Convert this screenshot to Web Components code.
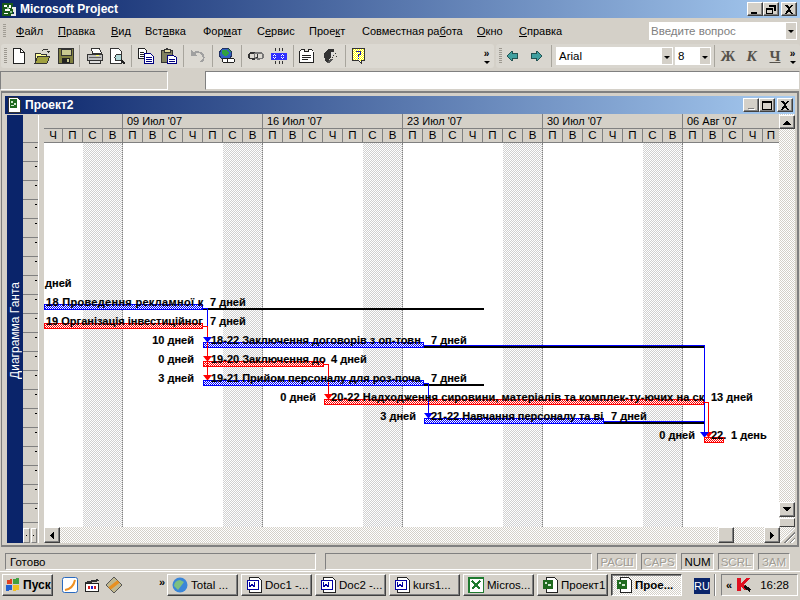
<!DOCTYPE html>
<html>
<head>
<meta charset="utf-8">
<title>Microsoft Project</title>
<style>
  html, body { margin: 0; padding: 0; height: 100%; overflow: hidden; background: #d4d0c8; }
  body { display: flex; flex-direction: column; width: 800px; height: 600px;
         font: 11px "Liberation Sans", Arial, sans-serif; color: #000; }
</style>
</head>
<body>
<app-titlebar></app-titlebar>
<menu-bar></menu-bar>
<tool-bars></tool-bars>
<entry-bar></entry-bar>
<project-window></project-window>
<status-bar></status-bar>
<task-bar></task-bar>

<script>
const GRAD = 'linear-gradient(90deg,#0a246a 0,#a6caf0 100%)';
const UI_FONT = '11.5px "Liberation Sans",Arial,sans-serif';

// small raised caption button (min, restore, close, scroll arrows)
class CapButton extends HTMLElement {
    constructor(){
        super();
        this.attachShadow({mode: 'open'});
        this.shadowRoot.innerHTML = `
            <style>
                :host { display: flex; align-items: center; justify-content: center; box-sizing: border-box;
                    width: var(--w,16px); height: var(--h,14px); background: #d4d0c8;
                    border: 1px solid; border-color: #fff #404040 #404040 #fff;
                    box-shadow: inset -1px -1px 0 #808080; flex: none; }
                svg { display: block; }
            </style>
            <svg width="10" height="9" viewBox="0 0 10 9" shape-rendering="crispEdges"></svg>
        `;
    }
    connectedCallback(){
        const shapes = {
            min: '<path d="M1 7h6v2H1z" fill="#000"/>',
            mingrey: '<path d="M2 7h6v1H2z" fill="#808080"/><path d="M3 8h6v1H3z" fill="#fff"/>',
            max: '<path d="M0 0h10v9H0zM1 2v6h8V2z" fill="#000" fill-rule="evenodd"/>',
            restore: '<path d="M3 0h7v6H8V2H3z M0 3h7v6H0z M1 5v3h5V5z" fill="#000" fill-rule="evenodd"/>',
            close: '<path d="M1 0h2l2 2 2-2h2L6 4l3 5H7L5 6 3 9H1l3-5z" fill="#000"/>',
            up: '<path d="M5 2l4 5H1z" fill="#000"/>',
            down: '<path d="M1 2h8L5 7z" fill="#000"/>',
            left: '<path d="M7 0v9L3 4.5z" fill="#000"/>',
            right: '<path d="M3 0v9l4-4.5z" fill="#000"/>'
        };
        this.shadowRoot.querySelector('svg').innerHTML = shapes[this.getAttribute('kind')] || '';
    }
}
customElements.define('cap-button', CapButton);

class AppTitlebar extends HTMLElement {
    constructor(){
        super();
        this.attachShadow({mode: 'open'});
        this.shadowRoot.innerHTML = `
            <style>
                :host { display: flex; align-items: center; height: 18px; flex: none; background: ${GRAD};
                    color: #fff; font: bold 12px "Liberation Sans",Arial,sans-serif; padding: 0 3px 0 2px; box-sizing: border-box; }
                svg { margin-right: 3px; flex: none; }
                span { flex: 1; }
                .btns { display: flex; }
                cap-button:last-child { margin-left: 2px; }
            </style>
            <svg width="15" height="15" viewBox="0 0 15 15" shape-rendering="crispEdges">
                <path d="M0 1h11v13H0z" fill="#1a5a1a"/>
                <path d="M2 3h3v2H2zM7 3h2v3H7zM3 7h5v2H3zM2 11h4v1H2z" fill="#fff"/>
                <path d="M10 5h4v9h-5v-2h3z" fill="#e8e8e8"/>
                <path d="M5 5h2v2H5zM8 9h2v2H8z" fill="#90c090"/>
            </svg>
            <span>Microsoft Project</span>
            <div class="btns">
                <cap-button kind="min"></cap-button><cap-button kind="restore"></cap-button><cap-button kind="close"></cap-button>
            </div>
        `;
    }
}
customElements.define('app-titlebar', AppTitlebar);

class MenuBar extends HTMLElement {
    constructor(){
        super();
        this.attachShadow({mode: 'open'});
        const items = [['Файл',0,42],['Правка',0,53],['Вид',0,34],['Вставка',3,58],['Формат',3,54],['Сервис',1,52],['Проект',4,53],['Совместная работа',13,115],['Окно',0,42],['Справка',0,60]];
        const html = items.map(([t,u,w]) => `<span class="it" style="width:${w}px">${t.slice(0,u)}<u>${t[u]}</u>${t.slice(u+1)}</span>`).join('');
        this.shadowRoot.innerHTML = `
            <style>
                :host { display: flex; align-items: center; height: 26px; flex: none; background: #d4d0c8; box-sizing: border-box; padding-left: 3px;
                    font: 11px "Liberation Sans",Arial,sans-serif; }
                .grip { width: 3px; height: 14px; margin-right: 10px; background: repeating-linear-gradient(#a09c94 0 1px,#d4d0c8 1px 2px); }
                .it { flex: none; white-space: nowrap; }
                .ask { margin-left: auto; margin-right: 3px; width: 148px; height: 18px; background: #fff; display: flex; align-items: center;
                    color: #808080; box-sizing: border-box; padding-left: 2px; font: ${UI_FONT}; }
                .ask span { flex: 1; }
                .dd { width: 12px; height: 18px; background: #d4d0c8; border: 1px solid #fff; box-sizing: border-box; display: flex; align-items: center; justify-content: center; }
                .dd i { border: 3px solid transparent; border-top: 3px solid #000; border-bottom: 0; }
            </style>
            <div class="grip"></div>${html}
            <div class="ask"><span>Введите вопрос</span><div class="dd"><i></i></div></div>
        `;
    }
}
customElements.define('menu-bar', MenuBar);

// pixel style toolbar icons
const ICONS = {
    'new': '<path d="M2.500 .5h7l4 4v11h-11z" fill="#fff" stroke="#222"/><path d="M9.500 .5v4h4" fill="none" stroke="#222"/>',
    open: '<path d="M1 5h5l1 1h5v3H4L1 15z" fill="#ffff99" stroke="#333"/><path d="M1 15l3-7h12l-3 7z" fill="#a0a040" stroke="#333"/><path d="M8 3q3-3 6-1" fill="none" stroke="#333"/><path d="M12 3h4l-2 2z" fill="#333"/>',
    save: '<path d="M.5 .5h15v15H.5z" fill="#808040" stroke="#333"/><path d="M3 1h10v6H3z" fill="#c8c890" stroke="#333"/><path d="M4 10h8v5H4z" fill="#222"/><path d="M9 11h2v3H9z" fill="#c8c890"/>',
    print: '<path d="M4.500 .5h8l2 5h-9z" fill="#fff" stroke="#333"/><path d="M.5 6.500h15v6H.5z" fill="#c0c0c0" stroke="#333"/><path d="M2 9h12v1H2z" fill="#606060"/><path d="M9 7h3v1H9z" fill="#ffff60"/><path d="M2.500 12.500h11v3h-11z" fill="#e0e0e0" stroke="#333"/>',
    preview: '<path d="M1.500 .5h8l3 3v12h-11z" fill="#fff" stroke="#333"/><circle cx="9.500" cy="9.500" r="3.500" fill="#b0d8d8" stroke="#333"/><path d="M12 12l4 4" stroke="#222" stroke-width="2"/>',
    copy: '<path d="M.5 .5h6l2 2v8h-8z" fill="#fff" stroke="#222"/><path d="M2 4h4M2 6h4M2 8h4" stroke="#222"/><path d="M6.500 5.500h6l3 3v7h-9z" fill="#fff" stroke="#000080"/><path d="M8 9h6M8 11h6M8 13h6" stroke="#000080"/>',
    paste: '<path d="M.5 2.500h11v12H.5z" fill="#808060" stroke="#333"/><path d="M3 1h6v3H3z" fill="#e0d8a0" stroke="#333"/><path d="M5 0h2v1H5z" fill="#333"/><path d="M6.500 7.500h6l3 2v6h-9z" fill="#fff" stroke="#000080"/><path d="M8 11h6M8 13h6" stroke="#000080"/>',
    undo: '<path d="M1 2v6h6L5 6c3-2 7-1 8 4-1 2-2 3-3 4h2c3-2 3-5 2-7C12 3 7 2 4 4z" fill="#a0a0a0"/>',
    globe: '<circle cx="6.500" cy="6" r="6" fill="#3060c0" stroke="#203060"/><path d="M3 2h5l2 3-2 3H5L3 5zM9 1l3 2-1 1z" fill="#30a040"/><rect x="3.500" y="10.500" width="7" height="4" rx="2" fill="#fff" stroke="#222"/><rect x="8.500" y="10.500" width="7" height="4" rx="2" fill="#fff" stroke="#222"/>',
    link: '<rect x=".75" y="4.750" width="9" height="6" rx="3" fill="none" stroke="#333" stroke-width="1.500"/><rect x="6.250" y="4.750" width="9" height="6" rx="3" fill="none" stroke="#777" stroke-width="1.500"/>',
    unlink: '<defs><pattern id="bd" width="2" height="2" patternUnits="userSpaceOnUse"><path d="M0 0h2v2H0z" fill="#fff"/><path d="M0 0h1v1H0zM1 1h1v1H1z" fill="#2020ff"/></pattern></defs><path d="M0 5h16v7H0z" fill="#3030ff"/><path d="M2 6h3v2H2zM10 6h3v2h-3zM2 9h3v2H2zM10 9h3v2h-3z" fill="url(#bd)"/><path d="M4 0l1 3M8 0v3M12 0l-1 3M4 16l1-3M8 16v-3M12 16l-1-3" stroke="#333"/>',
    notes: '<path d="M.5 3.500h14v11H.5z" fill="#fff" stroke="#222"/><path d="M.5 3.500l2-2h3v2M9.500 3.500v-2h3l2 2" fill="#fff" stroke="#222"/><path d="M3 7h9M3 9h9M3 11h6" stroke="#222"/>',
    assign: '<path d="M1 9a7 7 0 0 1 7-8h3v3l-3 2v3l-3 5H3z" fill="#333"/><path d="M7 11h3l-3 4H3z" fill="#555"/><path d="M10 3h1v1h-1zM12 5h1v1h-1zM10 7h1v1h-1zM13 8h1v1h-1zM9 9h1v1H9z" fill="#333"/><path d="M8 4h2v4H8z" fill="#ddd"/>',
    help: '<defs><pattern id="yd" width="2" height="2" patternUnits="userSpaceOnUse"><path d="M0 0h2v2H0z" fill="#fff"/><path d="M0 0h1v1H0zM1 1h1v1H1z" fill="#ffff00"/></pattern></defs><path d="M.5 .5h12v12h-3v3l-3-3h-6z" fill="url(#yd)" stroke="#333"/><path d="M4 4V3h5v4H7v2H6V6h2V4H5v1zM6 10h1v1H6z" fill="#2020b0"/>',
    back: '<path d="M7 1v4h7v6H7v4L0 8z" fill="#40a0a0" stroke="#205050" stroke-width="1.300"/>',
    fwd: '<path d="M7 1v4H0v6h7v4l7-7z" fill="#40a0a0" stroke="#205050" stroke-width="1.300"/>'
};

class ToolIcon extends HTMLElement {
    constructor(){
        super();
        this.attachShadow({mode: 'open'});
    }
    connectedCallback(){
        const w = this.getAttribute('w') || 23;
        const s = this.getAttribute('s') || 16;
        this.shadowRoot.innerHTML = `
            <style>
                :host { display: flex; align-items: center; justify-content: center; height: 24px; flex: none; width: ${w}px; }
            </style>
            <svg width="${s}" height="${s}" viewBox="0 0 16 16" shape-rendering="crispEdges">${ICONS[this.getAttribute('name')]}</svg>
        `;
    }
}
customElements.define('tool-icon', ToolIcon);

class ToolBars extends HTMLElement {
    constructor(){
        super();
        this.attachShadow({mode: 'open'});
        const ic = (n, w, s) => `<tool-icon name="${n}" w="${w}" ${s ? `s="${s}"` : ''}></tool-icon>`;
        const sep = (l, r) => `<i class="sep" style="margin:0 ${r}px 0 ${l}px"></i>`;
        this.shadowRoot.innerHTML = `
            <style>
                :host { display: flex; height: 24px; flex: none; gap: 2px; padding: 0 0 0 1px; }
                .bar { display: flex; align-items: center; height: 24px; background: #dcd9d2; border-radius: 3px; box-sizing: border-box; flex: none; }
                .one { width: 493px; padding-left: 2px; }
                .two { flex: 1; background: #d9d6cf; }
                .grip { width: 3px; height: 16px; margin: 0 0 0 1px; flex: none; background: repeating-linear-gradient(#9c9890 0 1px,transparent 1px 2px); }
                .sep { width: 1px; height: 22px; background: #a8a59d; flex: none; }
                .more { margin-left: auto; width: 11px; font: bold 10px/9px "Liberation Sans",sans-serif; text-align: center; margin-right: 2px; color: #000; flex: none; }
                .more b { display: block; width: 0; margin: 3px auto 0; border: 3px solid transparent; border-top-color: #000; border-bottom: 0; }
                .fld { height: 18px; background: #fff; display: flex; align-items: center; box-sizing: border-box; padding-left: 3px; font: ${UI_FONT}; flex: none; }
                .fld span { flex: 1; }
                .dd { width: 12px; height: 18px; background: #d4d0c8; display: flex; align-items: center; justify-content: center; border: 1px solid #fff; box-sizing: border-box; }
                .dd i { border: 3px solid transparent; border-top-color: #000; border-bottom: 0; margin-top: 2px; }
                .fm { text-align: center; font: bold 15px "Liberation Serif",serif; color: #55524c; flex: none; }
            </style>
            <div class="bar one">
                <div class="grip"></div>
                ${ic('new',23)}${ic('open',24)}${ic('save',23)}${sep(2,3)}
                ${ic('print',23)}${ic('preview',22)}${sep(3,2)}
                ${ic('copy',23)}${ic('paste',24)}${sep(2,2)}
                ${ic('undo',24)}${sep(2,2)}
                ${ic('globe',24)}${sep(2,2)}
                ${ic('link',24)}${ic('unlink',22)}${sep(3,1)}
                ${ic('notes',24)}${ic('assign',24)}${sep(2,2)}
                ${ic('help',24)}
                <div class="more">»<b></b></div>
            </div>
            <div class="bar two">
                <div class="grip" style="margin-left:3px"></div>
                ${ic('back',22,12)}${ic('fwd',26,12)}
                ${sep(1,4)}
                <div class="fld" style="width:117px"><span>Arial</span><div class="dd"><i></i></div></div>
                <div class="fld" style="width:36px;margin-left:2px"><span>8</span><div class="dd"><i></i></div></div>
                ${sep(3,1)}
                <span class="fm" style="width:24px">Ж</span><span class="fm" style="width:23px;font-style:italic">К</span><span class="fm" style="width:24px;text-decoration:underline">Ч</span>
                <div class="more">»<b></b></div>
            </div>
        `;
    }
}
customElements.define('tool-bars', ToolBars);

class EntryBar extends HTMLElement {
    constructor(){
        super();
        this.attachShadow({mode: 'open'});
        this.shadowRoot.innerHTML = `
            <style>
                :host { display: flex; align-items: center; height: 22px; flex: none; box-sizing: border-box; padding-top: 2px; }
                .name { width: 168px; height: 19px; border: 1px solid; border-color: #808080 #fff #fff #808080; box-sizing: border-box; }
                .val { margin-left: 37px; flex: 1; height: 19px; background: #fff; border: 1px solid; border-color: #808080 #d4d0c8 #d4d0c8 #808080; box-sizing: border-box; }
            </style>
            <div class="name"></div><div class="val"></div>
        `;
    }
}
customElements.define('entry-bar', EntryBar);

class ProjectWindow extends HTMLElement {
    constructor(){
        super();
        this.attachShadow({mode: 'open'});
        this.shadowRoot.innerHTML = `
            <style>
                :host { display: block; flex: none; height: 461px; box-sizing: border-box; padding: 1px 1px 4px 1px; background: #d4d0c8; }
                .frame { height: 100%; box-sizing: border-box; background: #d4d0c8; border: 1px solid #808080; border-width: 2px 2px 2px 1px; padding: 3px 2px 2px 3px; display: flex; flex-direction: column; }
                .cap { height: 18px; flex: none; background: ${GRAD}; color: #fff; font: bold 12px "Liberation Sans",sans-serif; display: flex; align-items: center; box-sizing: border-box; padding: 0 2px 0 2px; }
                .cap svg { margin-right: 3px; }
                .cap span { flex: 1; }
                .cap cap-button:last-child { margin-left: 2px; }
            </style>
            <div class="frame">
                <div class="cap">
                    <svg width="15" height="16" viewBox="0 0 15 16" shape-rendering="crispEdges">
                        <path d="M1.500 .5h9l3 3v12h-12z" fill="#fff" stroke="#333"/>
                        <path d="M3 2h7v9H3z" fill="#1f6a1f"/>
                        <path d="M4 4h2v2H4zM7 6h2v2H7zM4 8h3v1H4z" fill="#d0e8d0"/>
                    </svg>
                    <span>Проект2</span>
                    <cap-button kind="mingrey"></cap-button><cap-button kind="max"></cap-button><cap-button kind="close"></cap-button>
                </div>
                <gantt-view></gantt-view>
            </div>
        `;
    }
}
customElements.define('project-window', ProjectWindow);

class GanttView extends HTMLElement {
    constructor(){
        super();
        this.attachShadow({mode: 'open'});
        const week = ['П','В','С','Ч','П','С','В'];
        let days = ['Ч','П','С','В'];
        for (let i = 0; i < 4; i++) days = days.concat(week);
        days = days.concat(['П','В','С','Ч','П']);
        const dayCells = days.map(d => `<span>${d}</span>`).join('');
        let rows = '';
        for (let i = 0; i < 21; i++) rows += '<i></i>';
        this.shadowRoot.innerHTML = `
            <style>
                :host { display: flex; flex: 1; min-height: 0; background: #d4d0c8; font: 11px "Liberation Sans",sans-serif; }
                .band { width: 16px; flex: none; background: #0a246a; margin: 1px 0 0 2px; display: flex; justify-content: center; align-items: flex-start; }
                .band span { writing-mode: vertical-rl; transform: rotate(180deg); margin-top: 167px; white-space: nowrap; color: #fff; font: 12px "Liberation Sans",sans-serif; }
                .rh { width: 15px; flex: none; display: flex; flex-direction: column; overflow: hidden; margin-top: 1px; border-right: 1px solid #fff; }
                .rh i { display: block; height: 19px; flex: none; border-bottom: 1px solid #808080; box-sizing: border-box; position: relative; background: #d4d0c8; }
                .rh i:first-child { height: 28px; }
                .rh i::after { content: ''; position: absolute; right: 1px; top: 4px; width: 2px; height: 1px; background: #000; }
                .rh i:first-child::after { display: none; }
                .tail { display: flex; margin-top: auto; height: 15px; flex: none; gap: 1px; padding-right: 1px; }
                .tail b { flex: 1; background: #d4d0c8; border: 1px solid; border-color: #fff #808080 #808080 #fff; display: flex; align-items: center; justify-content: center; }
                .tail b::after { content: ''; width: 1px; height: 1px; background: #000; }
                .gap { width: 5px; flex: none; background: #d4d0c8; }
                .main { flex: 1; display: flex; flex-direction: column; min-width: 0; }
                .top { display: flex; flex: 1; min-height: 0; }
                .chart { flex: 1; min-width: 0; display: flex; flex-direction: column; }
                .dates { height: 15px; flex: none; display: flex; background: #d4d0c8; border-bottom: 1px solid #808080; box-sizing: border-box; font: 11px "Liberation Sans",sans-serif; }
                .dates span { flex: none; width: 140px; box-sizing: border-box; border-left: 1px solid #808080; padding-left: 4px; white-space: nowrap; line-height: 14px; }
                .dates span:first-child { width: 78px; padding: 0; border: 0; }
                .dates span:last-child { flex: 1; width: auto; }
                .days { height: 14px; flex: none; display: flex; background: #d4d0c8; border-bottom: 1px solid #808080; box-sizing: border-box; font: ${UI_FONT}; }
                .days span { flex: none; width: 20px; box-sizing: border-box; border-right: 1px solid #808080; text-align: center; line-height: 13px; }
                .days span:first-child { width: 19px; }
                .days span:last-child { flex: 1; width: auto; border: 0; }
                .canvas { flex: 1; position: relative; overflow: hidden; background: #fff; }
                .wk { position: absolute; top: 0; bottom: 0; width: 40px; background: repeating-conic-gradient(#d0d0d0 0 25%,#fff 0 50%) 0 0/2px 2px; border-right: 1px dotted #808080; box-sizing: border-box; }
                .vs { width: 16px; flex: none; display: flex; flex-direction: column; padding-top: 1px; box-sizing: border-box; background: repeating-conic-gradient(#d4d0c8 0 25%,#fff 0 50%) 0 0/2px 2px; }
                .vs .fill { flex: 1; }
                .vs .thumb { height: 9px; margin-top: 1px; background: #d4d0c8; border: 1px solid; border-color: #fff #404040 #404040 #fff; box-sizing: border-box; flex: none; }
                .hs { height: 16px; flex: none; display: flex; background: repeating-conic-gradient(#d4d0c8 0 25%,#fff 0 50%) 0 0/2px 2px; }
                .hs .thumb { width: 16px; background: #d4d0c8; border: 1px solid; border-color: #fff #404040 #404040 #fff; box-shadow: inset -1px -1px 0 #808080; box-sizing: border-box; margin-left: 658px; flex: none; }
                .hs .fill { flex: 1; }
                .hs .grip { width: 15px; background: repeating-linear-gradient(135deg,#d4d0c8 0 2px,#808080 2px 3px,#fff 3px 4px); flex: none; clip-path: polygon(100% 0,100% 100%,0 100%); }
                .vs cap-button { --w: 16px; --h: 14px; }
                .vs cap-button + .fill + cap-button { --h: 15px; }
                .hs cap-button { --w: 16px; --h: 16px; }
                .bar { position: absolute; box-sizing: border-box; border: 1px solid; }
                .bl { border-color: #00f; background: repeating-conic-gradient(#00f 0 25%,#fff 0 50%) 0 0/2px 2px; }
                .rd { border-color: #f00; background: repeating-conic-gradient(#f00 0 25%,#fff 0 50%) 0 0/2px 2px; }
                .sum { position: absolute; height: 2px; background: #000; }
                .ln { position: absolute; }
                .ar { position: absolute; width: 1px; height: 0; border: 4px solid transparent; border-top-width: 5px; border-bottom: 0; }
                .t { position: absolute; font: bold 11px/13px "Liberation Sans",sans-serif; white-space: pre; color: #000; -webkit-text-stroke: .15px #000; }
            </style>
            <div class="band"><span>Диаграмма Ганта</span></div>
            <div class="rh">${rows}<div class="tail"><b></b><b></b></div></div>
            <div class="gap"></div>
            <div class="main">
                <div class="top">
                    <div class="chart">
                        <div class="dates"><span></span><span>09 Июл '07</span><span>16 Июл '07</span><span>23 Июл '07</span><span>30 Июл '07</span><span>06 Авг '07</span></div>
                        <div class="days">${dayCells}</div>
                        <div class="canvas" id="c"></div>
                    </div>
                    <div class="vs">
                        <cap-button kind="up"></cap-button>
                        <div class="fill"></div>
                        <cap-button kind="down"></cap-button>
                        <div class="thumb"></div>
                    </div>
                </div>
                <div class="hs">
                    <cap-button kind="left"></cap-button><div class="thumb"></div><div class="fill"></div><cap-button kind="right"></cap-button><div class="grip"></div>
                </div>
            </div>
        `;
    }
    connectedCallback(){
        // canvas origin in page coordinates
        const OX = 44, OY = 143;
        const c = this.shadowRoot.getElementById('c');
        let h = '';
        [83,223,363,503,643].forEach(x => { h += `<div class="wk" style="left:${x-OX}px"></div>`; });
        const bar = (x1,x2,y1,y2,k) => `<div class="bar ${k}" style="left:${x1-OX}px;width:${x2-x1}px;top:${y1-OY}px;height:${y2-y1}px"></div>`;
        const sum = (x1,x2,y) => `<div class="sum" style="left:${x1-OX}px;width:${x2-x1}px;top:${y-OY}px"></div>`;
        const hl = (x1,x2,y,col) => `<div class="ln" style="left:${x1-OX}px;width:${x2-x1}px;top:${y-OY}px;height:1px;background:${col}"></div>`;
        const vl = (x,y1,y2,col) => `<div class="ln" style="left:${x-OX}px;width:1px;top:${y1-OY}px;height:${y2-y1}px;background:${col}"></div>`;
        const ar = (x,y,col) => `<div class="ar" style="left:${x-4-OX}px;top:${y-OY}px;border-top-color:${col}"></div>`;
        const t = (x,y,s,ls) => `<div class="t" style="left:${x-OX}px;top:${y-OY}px${ls ? `;letter-spacing:${ls}px` : ''}">${s}</div>`;
        const tr = (x,y,s) => `<div class="t" style="left:${x-OX}px;top:${y-OY}px;transform:translateX(-100%)">${s}</div>`;

        h += sum(203,484,308) + sum(424,704,346) + sum(424,484,384) + sum(604,704,422);
        h += bar(44,203,304,310,'bl') + bar(44,203,323,329,'rd');
        h += bar(203,424,342,348,'bl') + bar(203,324,361,367,'rd') + bar(203,424,380,386,'bl');
        h += bar(324,704,399,405,'rd') + bar(424,604,418,424,'bl') + bar(704,724,437,443,'rd');

        h += hl(203,207,308,'#00f') + vl(207,308,337,'#00f');
        h += hl(203,207,326,'#f00') + vl(207,326,375,'#f00');
        h += hl(424,705,345,'#00f') + vl(704,345,432,'#00f');
        h += hl(324,328,364,'#f00') + vl(328,364,394,'#f00');
        h += hl(424,428,383,'#00f') + vl(428,383,413,'#00f');
        h += hl(704,708,402,'#f00') + vl(708,402,432,'#f00');
        h += hl(604,704,421,'#00f');

        h += ar(207,337,'#00f') + ar(207,356,'#f00') + ar(207,375,'#f00') + ar(328,394,'#f00') + ar(428,413,'#00f') + ar(708,432,'#f00') + ar(704,432,'#00f');

        h += t(45,277,'дней');
        h += t(46,296,'18 Проведення рекламної к',.3) + t(210,296,'7 дней');
        h += t(46,315,'19 Організація інвестиційног') + t(210,315,'7 дней');
        h += tr(194,334,'10 дней') + t(211,334,'18-22 Заключення договорів з оп-товн') + t(431,334,'7 дней');
        h += tr(194,353,'0 дней') + t(211,353,'19-20 Заключення до') + t(331,353,'4 дней');
        h += tr(194,372,'3 дней') + t(211,372,'19-21 Прийом персоналу для роз-поча') + t(431,372,'7 дней');
        h += tr(316,391,'0 дней') + t(331,391,'20-22 Надходження сировини, матеріалів та комплек-ту-ючих на ск',.11) + t(711,391,'13 дней');
        h += tr(416,410,'3 дней') + t(431,410,'21-22 Навчання персоналу та ві') + t(611,410,'7 дней');
        h += tr(695,429,'0 дней') + t(711,429,'22.') + t(731,429,'1 день');
        c.innerHTML = h;
    }
}
customElements.define('gantt-view', GanttView);

class StatusBar extends HTMLElement {
    constructor(){
        super();
        this.attachShadow({mode: 'open'});
        const cell = (t, w, on) => `<div class="c ${on ? 'on' : ''}" style="width:${w}px">${t}</div>`;
        this.shadowRoot.innerHTML = `
            <style>
                :host { display: flex; align-items: flex-start; height: 20px; flex: none; box-sizing: border-box; padding: 2px 0 0 5px; font: ${UI_FONT}; gap: 4px; }
                .c { height: 17px; box-sizing: border-box; border: 1px solid; border-color: #808080 #fff #fff #808080; display: flex; align-items: center; flex: none; color: #a09c94; justify-content: center; text-shadow: 1px 1px 0 #fff; }
                .c.on { color: #000; text-shadow: none; }
                .ready { width: 311px; justify-content: flex-start; padding-left: 4px; color: #000; text-shadow: none; margin-right: 5px; }
                .wide { width: 267px; margin-right: 1px; }
            </style>
            <div class="c ready">Готово</div>
            <div class="c wide"></div>
            ${cell('РАСШ',40)}${cell('CAPS',36)}${cell('NUM',33,true)}${cell('SCRL',36)}${cell('ЗАМ',32)}
        `;
    }
}
customElements.define('status-bar', StatusBar);

class TaskButton extends HTMLElement {
    constructor(){
        super();
        this.attachShadow({mode: 'open'});
        this.shadowRoot.innerHTML = `
            <style>
                :host { display: flex; align-items: center; width: 71px; height: 22px; box-sizing: border-box; flex: none; padding-left: 4px; gap: 3px;
                    background: #d4d0c8; border: 1px solid; border-color: #fff #404040 #404040 #fff; box-shadow: inset -1px -1px 0 #808080; white-space: nowrap; }
                :host([active]) { font-weight: bold; border-color: #404040 #fff #fff #404040; box-shadow: inset 1px 1px 0 #808080;
                    background: repeating-conic-gradient(#d4d0c8 0 25%,#fff 0 50%) 0 0/2px 2px; }
            </style>
            <slot name="icon"></slot><slot></slot>
        `;
    }
}
customElements.define('task-button', TaskButton);

class TaskBar extends HTMLElement {
    constructor(){
        super();
        this.attachShadow({mode: 'open'});
        const doc = `<svg slot="icon" width="16" height="16" viewBox="0 0 16 16" shape-rendering="crispEdges"><path d="M3.500 .5h9l3 3v12h-12z" fill="#fff" stroke="#222"/><path d="M1 3h11v9H1z" fill="#fff" stroke="#0000a0"/><path d="M3 5l1 5 2-3 2 3 1-5" fill="none" stroke="#0000a0"/></svg>`;
        const prj = `<svg slot="icon" width="16" height="16" viewBox="0 0 16 16" shape-rendering="crispEdges"><path d="M4.500 .5h8l3 3v12h-11z" fill="#fff" stroke="#222"/><path d="M1 3h10v9H1z" fill="#1f6a1f"/><path d="M3 5h2v2H3zM6 7h3v2H6z" fill="#d0e8d0"/></svg>`;
        const xl = `<svg slot="icon" width="16" height="16" viewBox="0 0 16 16" shape-rendering="crispEdges"><path d="M.5 .5h15v15H.5z" fill="#fff" stroke="#1f7a2f" stroke-width="2"/><path d="M4 4l8 8M12 4l-8 8" stroke="#1f7a2f" stroke-width="2.400"/></svg>`;
        const tc = `<svg slot="icon" width="16" height="16" viewBox="0 0 16 16"><circle cx="8" cy="8" r="7.500" fill="#3a86d8"/><path d="M2 9a6 6 0 0 1 6-6l4 2-6 8z" fill="#7ec080"/></svg>`;
        this.shadowRoot.innerHTML = `
            <style>
                :host { display: flex; align-items: flex-start; height: 29px; flex: none; box-sizing: border-box; padding: 2px 2px 0 2px; border-top: 1px solid #fff; font: ${UI_FONT}; }
                .start { display: flex; align-items: center; width: 51px; height: 22px; box-sizing: border-box; flex: none; gap: 2px; padding-left: 2px; font: bold 12px "Liberation Sans",sans-serif;
                    background: #d4d0c8; border: 1px solid; border-color: #fff #404040 #404040 #fff; box-shadow: inset -1px -1px 0 #808080; }
                .quick { display: flex; align-items: center; margin-left: 9px; gap: 6px; width: 105px; flex: none; height: 22px; }
                .more { margin-left: 31px; margin-top: -6px; font: bold 11px "Liberation Sans",sans-serif; }
                .tasks { display: flex; gap: 3px; flex: none; margin-right: 12px; }
                .ru { width: 16px; height: 16px; margin-top: 4px; background: #0a246a; color: #fff; font: 11px/16px "Liberation Sans",sans-serif; text-align: center; flex: none; }
                .sep { width: 1px; height: 22px; background: #808080; border-right: 1px solid #fff; margin: 0 5px 0 4px; flex: none; }
                .tray { flex: 1; height: 22px; display: flex; align-items: center; box-sizing: border-box; border: 1px solid; border-color: #808080 #fff #fff #808080; padding-left: 4px; }
                .tray b { font: bold 11px "Liberation Sans",sans-serif; margin-right: 4px; }
                .tray span { margin-left: auto; margin-right: 8px; }
            </style>
            <div class="start">
                <svg width="16" height="16" viewBox="0 0 16 16" shape-rendering="crispEdges">
                    <path d="M2 3l5-1v5H2z" fill="#e04020"/><path d="M8 2l6-1v6H8z" fill="#40a040"/>
                    <path d="M1 8h6v5l-6 1z" fill="#2060d0"/><path d="M8 8h6v5l-6 1z" fill="#f0c020"/>
                </svg>Пуск
            </div>
            <div class="quick">
                <svg width="16" height="16" viewBox="0 0 16 16"><rect x=".5" y=".5" width="15" height="15" rx="2" fill="#fff" stroke="#2a6ac0"/><path d="M3 13q8-1 10-10" fill="none" stroke="#f09020" stroke-width="2"/></svg>
                <svg width="16" height="16" viewBox="0 0 16 16" shape-rendering="crispEdges"><path d="M1 5l13-3 1 2-13 3z" fill="#333"/><path d="M1.500 6.500h13v8h-13z" fill="#fff" stroke="#222"/><path d="M4 9h2v3H4z" fill="#d02020"/><path d="M7 9h2v3H7z" fill="#2020d0"/><path d="M10 9h2v3h-2z" fill="#d02020"/></svg>
                <svg width="16" height="16" viewBox="0 0 16 16"><path d="M8 0l8 8-8 8-8-8z" fill="#c0b890" stroke="#555"/><path d="M3 11L12 4M4 12l9-7" stroke="#e89020" stroke-width="2"/></svg>
                <span class="more">»</span>
            </div>
            <div class="tasks">
                <task-button>${tc}Total ...</task-button>
                <task-button>${doc}Doc1 -...</task-button>
                <task-button>${doc}Doc2 -...</task-button>
                <task-button>${doc}kurs1...</task-button>
                <task-button>${xl}Micros...</task-button>
                <task-button>${prj}Проект1</task-button>
                <task-button active>${prj}Прое...</task-button>
            </div>
            <div class="ru">RU</div>
            <div class="sep"></div>
            <div class="tray">
                <b>«</b>
                <svg width="16" height="16" viewBox="0 0 16 16" shape-rendering="crispEdges"><path d="M1 1h4v5l5-5h4L8 8l3 3-2 3L5 9v5H1z" fill="#e01020"/><path d="M9 8l6 4-1 3-6-4z" fill="#111"/></svg>
                <span>16:28</span>
            </div>
        `;
    }
}
customElements.define('task-bar', TaskBar);
</script>
</body>
</html>
